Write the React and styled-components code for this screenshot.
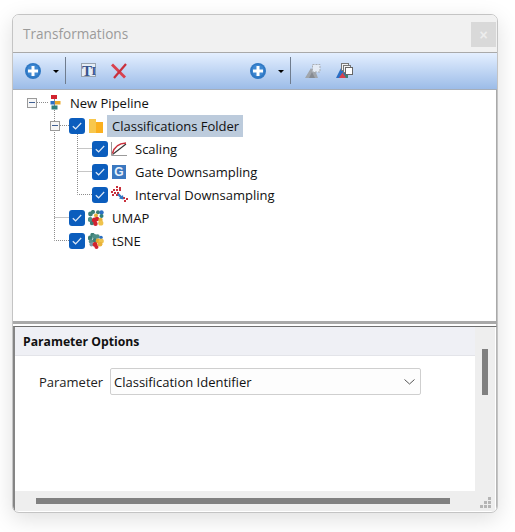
import React from 'react';
import styled, { createGlobalStyle } from 'styled-components';

const Global = createGlobalStyle`
  html, body { margin: 0; padding: 0; background: #fff; }
  body { font-family: "Open Sans", "Noto Sans", "Liberation Sans", sans-serif; }
  * { box-sizing: border-box; }
`;

const Page = styled.div`
  width: 515px;
  height: 532px;
  padding: 14px 0 0 12px;
  overflow: hidden;
`;

const Win = styled.div`
  width: 486px;
  height: 499px;
  display: flex;
  flex-direction: column;
  background: #fff;
  border: 1px solid #c4c4c4;
  border-radius: 7px;
  box-shadow: 0 6px 22px rgba(0,0,0,.13);
  overflow: hidden;
`;

const TitleBar = styled.div`
  height: 38px;
  flex: none;
  display: flex;
  align-items: center;
  justify-content: space-between;
  padding: 0 1px 0 10px;
  background: #f1f1f1;
  border-bottom: 1px solid #a9a9a9;
`;

const Title = styled.div`
  font-size: 13.6px;
  color: #9b9b9b;
`;

const CloseBtn = styled.div`
  width: 25px;
  height: 25px;
  margin-top: 2px;
  display: flex;
  align-items: center;
  justify-content: center;
  background: #d9d9d9;
  color: #ededed;
  font-size: 14px;
  font-family: "Liberation Sans", sans-serif;
  font-weight: 700;
`;

const Toolbar = styled.div`
  height: 37px;
  flex: none;
  display: flex;
  align-items: center;
  padding: 0 0 1px 12px;
  background: linear-gradient(#e4efff, #9cbce8);
  border-bottom: 1px solid #a6aeb9;
`;

const ToolIcon = styled.svg`
  flex: none;
  display: block;
  margin-left: ${p => p.$gap || 0}px;
`;

const Caret = styled.div`
  flex: none;
  margin-left: 12px;
  width: 0;
  height: 0;
  margin-top: 2px;
  border-left: 3px solid transparent;
  border-right: 3px solid transparent;
  border-top: 3px solid #000;
`;

const ToolSep = styled.div`
  flex: none;
  width: 1px;
  height: 27px;
  margin-left: 6px;
  background: #6f7c8e;
`;

const TreePane = styled.div`
  position: relative;
  height: 231px;
  flex: none;
  padding-top: 1px;
  border-right: 1px solid #a9a9a9;
  background: #fff;
`;

const TreeLines = styled.svg`
  position: absolute;
  left: 0;
  top: 0;
  pointer-events: none;
`;

const Row = styled.div`
  position: relative;
  height: 23px;
  display: flex;
  align-items: center;
  padding-left: ${p => p.$indent}px;
`;

const Expander = styled.div`
  flex: none;
  width: 10px;
  height: 10px;
  margin-right: ${p => p.$after}px;
  border: 1px solid #9a9a9a;
  background: #f6f6f6;
  display: flex;
  align-items: center;
  justify-content: center;
  &::after {
    content: "";
    width: 6px;
    height: 1px;
    background: #3f5f92;
  }
`;

const Check = styled.div`
  flex: none;
  width: 16px;
  height: 16px;
  border-radius: 3px;
  background: #0b5dbd;
  display: flex;
  align-items: center;
  justify-content: center;
`;

const RowIcon = styled.svg`
  flex: none;
  display: block;
  margin-left: ${p => p.$gap ?? 3}px;
`;

const Label = styled.div`
  font-size: 13px;
  line-height: 22px;
  color: #111;
  white-space: nowrap;
  margin-left: ${p => p.$gap}px;
  padding-left: ${p => (p.$selected ? 5 : 0)}px;
  width: ${p => (p.$selected ? '136px' : 'auto')};
  background: ${p => (p.$selected ? '#bccbdc' : 'transparent')};
`;

const Splitter = styled.div`
  height: 5px;
  flex: none;
  background: #fff;
  border-top: 3px solid #a9a9a9;
  border-right: 1px solid #a9a9a9;
`;

const Panel = styled.div`
  flex: 1;
  min-height: 0;
  display: grid;
  grid-template-columns: 1fr 20px;
  grid-template-rows: 1fr 20px;
  padding: 0 1px 1px 0;
  border-top: 1px solid #6f6f6f;
  border-left: 2px solid #858585;
  border-right: 1px solid #b5b5b5;
`;

const PanelBody = styled.div`
  background: #fff;
  min-width: 0;
`;

const PanelHeader = styled.div`
  height: 29px;
  padding-left: 8px;
  display: flex;
  align-items: center;
  background: #eff0f5;
  border-bottom: 1px solid #e3e4e9;
  font-size: 12.2px;
  font-weight: 700;
  color: #111;
`;

const Field = styled.div`
  display: flex;
  align-items: center;
  margin-top: 12px;
  padding-left: 24px;
`;

const FieldLabel = styled.div`
  width: 71px;
  flex: none;
  font-size: 13px;
  color: #222;
`;

const Combo = styled.div`
  width: 311px;
  height: 27px;
  flex: none;
  display: flex;
  align-items: center;
  justify-content: space-between;
  padding: 0 5px 0 3px;
  background: #fdfdfd;
  border: 1px solid #cfcfcf;
  border-radius: 2px;
  font-size: 13px;
  color: #111;
`;

const VTrack = styled.div`
  background: #eeeeee;
  padding: 22px 0 0 7px;
`;

const VThumb = styled.div`
  width: 6px;
  height: 46px;
  background: #808080;
`;

const HTrack = styled.div`
  background: #eeeeee;
  padding: 7px 0 0 21px;
`;

const HThumb = styled.div`
  width: 414px;
  height: 6px;
  background: #808080;
`;

const Corner = styled.div`
  background: #eeeeee;
  display: flex;
  align-items: flex-end;
  justify-content: flex-end;
  padding: 0 3px 2px 0;
`;

const Plus = ({ gap }) => (
  <ToolIcon $gap={gap} width="16" height="16" viewBox="0 0 16 16">
    <circle cx="8" cy="8" r="8" fill="#2f78c4" />
    <circle cx="8" cy="7.5" r="6" fill="#3f88d2" />
    <rect x="3" y="6.5" width="10" height="3" fill="#fff" />
    <rect x="6.5" y="3" width="3" height="10" fill="#fff" />
  </ToolIcon>
);

const TIcon = ({ gap }) => (
  <ToolIcon $gap={gap} width="15" height="15" viewBox="0 0 15 15">
    <rect x=".5" y=".5" width="14" height="13" fill="#e6edf5" stroke="#97a3b0" />
    <text x="1" y="12.5" fontFamily="Liberation Serif" fontWeight="700" fontSize="15" fill="#38558f">T</text>
    <text x="10.5" y="12" fontFamily="Liberation Serif" fontWeight="700" fontSize="12" fill="#38558f">I</text>
  </ToolIcon>
);

const RedX = ({ gap }) => (
  <ToolIcon $gap={gap} width="16" height="16" viewBox="0 0 16 16">
    <path d="M1 1.5 L14 14.5" stroke="#d9414e" strokeWidth="2.8" />
    <path d="M15 1 L3 15" stroke="#c9303c" strokeWidth="2.2" />
  </ToolIcon>
);

const Mountains = ({ gap }) => (
  <ToolIcon $gap={gap} width="16" height="16" viewBox="0 0 16 16">
    <path d="M0 15 L6 5 L9 9 L10 7 L13 15 Z" fill="#a1a6ac" />
    <path d="M4 15 L7 9 L10 15 Z" fill="#868b92" />
    <rect x="7.5" y="1.5" width="7.5" height="7.5" fill="#e4ebf5" stroke="#a9adb3" strokeDasharray="2 1" />
  </ToolIcon>
);

const Layers = ({ gap }) => (
  <ToolIcon $gap={gap} width="17" height="16" viewBox="0 0 17 16">
    <path d="M0 15 L6 3 L9 9 L9 15 Z" fill="#2a6fc4" />
    <path d="M8 7 L12 7 L12 15 L9 15 Z" fill="#3d7f75" />
    <path d="M3 15 L6.5 9.5 L10 15 Z" fill="#d8414c" />
    <rect x="5.5" y=".5" width="7" height="7" fill="#f3f3f3" stroke="#777" />
    <rect x="7.5" y="2.5" width="7" height="7" fill="#f3f3f3" stroke="#777" />
    <rect x="9.5" y="4.5" width="7" height="7" fill="#fff" stroke="#666" />
  </ToolIcon>
);

const Tick = () => (
  <svg width="10" height="8" viewBox="0 0 10 8">
    <path d="M.8 4.2 L3.6 6.8 L9.2 1" fill="none" stroke="#dfeaf7" strokeWidth="1.2" />
  </svg>
);

const PipelineIcon = () => (
  <RowIcon $gap={0} width="14" height="15" viewBox="0 0 14 15">
    <path d="M6.5 3 V12 M3 8.5 H11" stroke="#8a8f96" />
    <rect x="3" y="0" width="6" height="4" fill="#d2232f" />
    <rect x="2.5" y="6" width="4" height="3.5" fill="#2a6fc4" />
    <rect x="7" y="6" width="5.5" height="3.5" fill="#e9a92c" />
    <rect x="3.5" y="10.5" width="6" height="4" fill="#2f7f7c" />
  </RowIcon>
);

const FolderIcon = () => (
  <RowIcon $gap={4} width="14" height="14" viewBox="0 0 14 14">
    <path d="M0 0 H6 L7 3 H14 V14 H0 Z" fill="#fbb01f" />
    <rect x="0" y="0" width="7" height="14" fill="#f8c74c" />
  </RowIcon>
);

const ScalingIcon = () => (
  <RowIcon $gap={3} width="16" height="14" viewBox="0 0 16 14">
    <path d="M.5 0 V13.5 H16" fill="none" stroke="#9a9a9a" />
    <path d="M1.5 12.5 L15 2" stroke="#333" strokeWidth="1.1" />
    <path d="M1.5 11.5 C3 5 7 1.5 15 1" fill="none" stroke="#c9303c" strokeWidth="1.6" />
  </RowIcon>
);

const GateIcon = () => (
  <RowIcon $gap={4} width="14" height="14" viewBox="0 0 14 14">
    <rect width="14" height="14" fill="#3a78c0" />
    <text x="7" y="11.2" textAnchor="middle" fontFamily="Liberation Sans" fontWeight="700" fontSize="12" fill="#eaf2fb">G</text>
  </RowIcon>
);

const dots = [[5,0],[8,1],[2,3],[5,3],[8,3],[0,5],[3,6],[6,6],[1,8],[5,8],[12,11],[15,12],[13,14]];
const IntervalIcon = () => (
  <RowIcon $gap={3} width="17" height="17" viewBox="0 0 17 17">
    {dots.map(([x, y], i) => <rect key={i} x={x} y={y} width="2" height="2" fill="#c9303c" />)}
    <path d="M7 8 L11 12" stroke="#2f78c4" strokeWidth="2.4" />
    <path d="M12.5 13.5 L8 12.5 L12 9 Z" fill="#2f78c4" />
  </RowIcon>
);

const ClusterIcon = ({ blobs }) => (
  <RowIcon $gap={3} width="16" height="16" viewBox="0 0 16 16">
    {blobs.map(([x, y, r, c], i) => <circle key={i} cx={x} cy={y} r={r} fill={c} />)}
  </RowIcon>
);

const umap = [
  [2.5,4,2.4,'#3d7f75'],[5,2,2.1,'#3d7f75'],[10,2.2,2,'#3d7f75'],[13.5,2.5,2.2,'#2a6fc4'],[13.5,6,2,'#2f7f7c'],
  [2.2,9.5,2.4,'#4e8f86'],[4,13,2.2,'#3d7f75'],[8,5.5,2,'#e9b23a'],[6.5,10,2.6,'#d2232f'],[9,9,2.2,'#d2232f'],
  [7.5,13.8,2.2,'#d2232f'],[12.5,10,2.2,'#e9b23a'],[12.8,13,2.6,'#efc34c']
];
const tsne = [
  [4.5,2,2.2,'#3d7f75'],[2.2,5,2.4,'#3d7f75'],[6.5,3.5,2.4,'#4e8f86'],[9.5,3.5,2.2,'#4e8f86'],[13,4.5,1.8,'#2a6fc4'],
  [3,8.5,2.2,'#5c8f8a'],[3.5,11.5,2,'#7d9aa8'],[7,7.5,2.4,'#3d7f75'],[10,8,2.4,'#e9a92c'],[13.2,8,2.6,'#efc34c'],
  [12,11.2,2.4,'#e9b23a'],[7,11.5,2.4,'#d2232f'],[8.5,14,2,'#d2232f']
];

export default function App() {
  return (
    <>
      <Global />
      <Page>
        <Win>
          <TitleBar>
            <Title>Transformations</Title>
            <CloseBtn>×</CloseBtn>
          </TitleBar>
          <Toolbar>
            <Plus />
            <Caret />
            <ToolSep />
            <TIcon gap={15} />
            <RedX gap={15} />
            <Plus gap={123} />
            <Caret />
            <ToolSep />
            <Mountains gap={14} />
            <Layers gap={15} />
          </Toolbar>
          <TreePane>
            <TreeLines width="484" height="231" viewBox="0 0 484 231">
              <g stroke="#8c8c8c" strokeDasharray="1 1" fill="none">
                <path d="M24 12.5 H35 M41.5 20 V150.5 H56 M47 35.5 H56 M41.5 127.5 H56 M64.5 44 V104.5 H79 M64.5 58.5 H79 M64.5 81.5 H79" />
              </g>
            </TreeLines>
            <Row $indent={14}>
              <Expander $after={11} />
              <PipelineIcon />
              <Label $gap={8}>New Pipeline</Label>
            </Row>
            <Row $indent={37}>
              <Expander $after={9} />
              <Check><Tick /></Check>
              <FolderIcon />
              <Label $selected $gap={4}>Classifications Folder</Label>
            </Row>
            <Row $indent={79}>
              <Check><Tick /></Check>
              <ScalingIcon />
              <Label $gap={8}>Scaling</Label>
            </Row>
            <Row $indent={79}>
              <Check><Tick /></Check>
              <GateIcon />
              <Label $gap={9}>Gate Downsampling</Label>
            </Row>
            <Row $indent={79}>
              <Check><Tick /></Check>
              <IntervalIcon />
              <Label $gap={7}>Interval Downsampling</Label>
            </Row>
            <Row $indent={56}>
              <Check><Tick /></Check>
              <ClusterIcon blobs={umap} />
              <Label $gap={8}>UMAP</Label>
            </Row>
            <Row $indent={56}>
              <Check><Tick /></Check>
              <ClusterIcon blobs={tsne} />
              <Label $gap={8}>tSNE</Label>
            </Row>
          </TreePane>
          <Splitter />
          <Panel>
            <PanelBody>
              <PanelHeader>Parameter Options</PanelHeader>
              <Field>
                <FieldLabel>Parameter</FieldLabel>
                <Combo>
                  Classification Identifier
                  <svg width="11" height="6" viewBox="0 0 11 6">
                    <path d="M.5 .5 L5.5 5 L10.5 .5" fill="none" stroke="#555" />
                  </svg>
                </Combo>
              </Field>
            </PanelBody>
            <VTrack><VThumb /></VTrack>
            <HTrack><HThumb /></HTrack>
            <Corner>
              <svg width="12" height="12" viewBox="0 0 12 12">
                <g fill="#b5b5b5">
                  <rect x="8" y="0" width="3" height="3" />
                  <rect x="4" y="4" width="3" height="3" />
                  <rect x="8" y="4" width="3" height="3" />
                  <rect x="0" y="8" width="3" height="3" />
                  <rect x="4" y="8" width="3" height="3" />
                  <rect x="8" y="8" width="3" height="3" />
                </g>
              </svg>
            </Corner>
          </Panel>
        </Win>
      </Page>
    </>
  );
}
